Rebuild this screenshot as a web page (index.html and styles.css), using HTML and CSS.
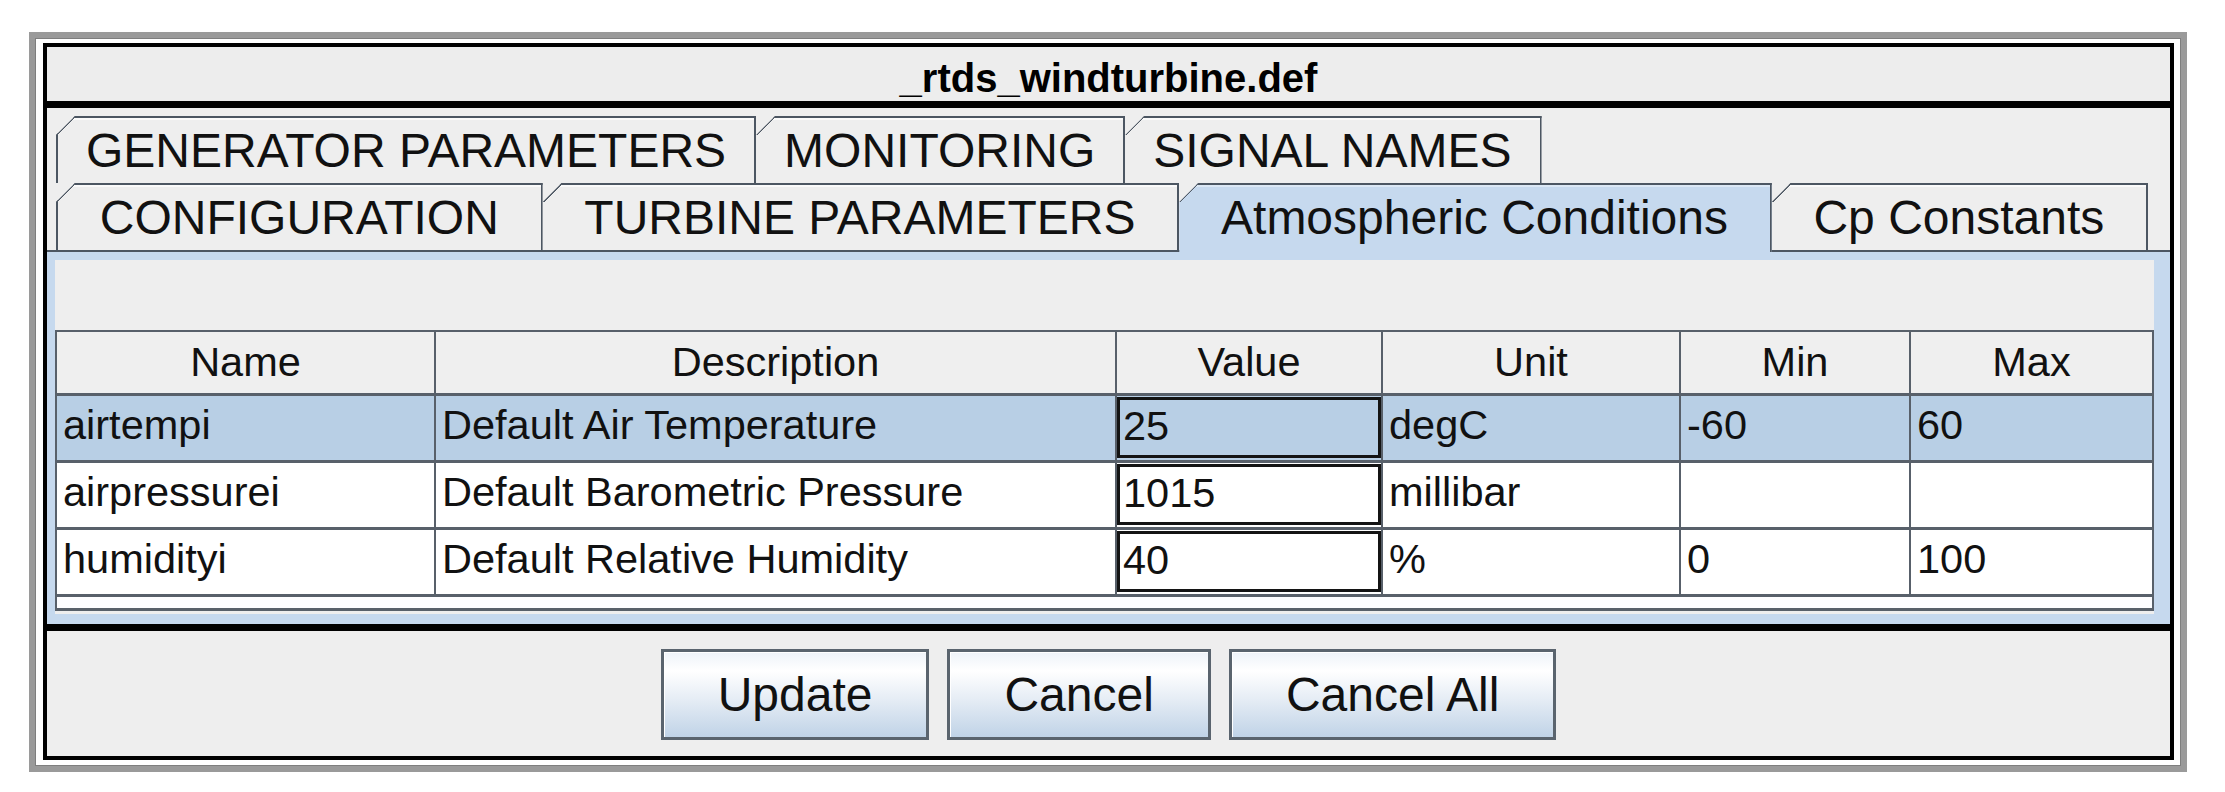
FILE: index.html
```html
<!DOCTYPE html>
<html lang="en">
<head>
<meta charset="utf-8">
<title>_rtds_windturbine.def</title>
<link rel="stylesheet" href="styles.css">
</head>
<body>
<div class="window">
  <div class="frame">
    <div class="title">_rtds_windturbine.def</div>
    <div class="tabpane">
      <div class="tabrow">
        <div class="tab first">GENERATOR PARAMETERS</div>
        <div class="tab">MONITORING</div>
        <div class="tab">SIGNAL NAMES</div>
      </div>
      <div class="tabrow front">
        <div class="tab first">CONFIGURATION</div>
        <div class="tab">TURBINE PARAMETERS</div>
        <div class="tab selected">Atmospheric Conditions</div>
        <div class="tab">Cp Constants</div>
      </div>
      <div class="content">
        <div class="inner">
          <div class="scroll">
            <table class="grid">
              <colgroup>
                <col class="c-name">
                <col class="c-desc">
                <col class="c-val">
                <col class="c-unit">
                <col class="c-min">
                <col class="c-max">
              </colgroup>
              <thead>
                <tr>
                  <th>Name</th>
                  <th>Description</th>
                  <th>Value</th>
                  <th>Unit</th>
                  <th>Min</th>
                  <th>Max</th>
                </tr>
              </thead>
              <tbody>
                <tr class="sel">
                  <td>airtempi</td>
                  <td>Default Air Temperature</td>
                  <td class="val"><div class="edit">25</div></td>
                  <td>degC</td>
                  <td>-60</td>
                  <td>60</td>
                </tr>
                <tr>
                  <td>airpressurei</td>
                  <td>Default Barometric Pressure</td>
                  <td class="val"><div class="edit">1015</div></td>
                  <td>millibar</td>
                  <td></td>
                  <td></td>
                </tr>
                <tr>
                  <td>humidityi</td>
                  <td>Default Relative Humidity</td>
                  <td class="val"><div class="edit">40</div></td>
                  <td>%</td>
                  <td>0</td>
                  <td>100</td>
                </tr>
              </tbody>
            </table>
          </div>
        </div>
      </div>
    </div>
    <div class="buttons">
      <button class="btn">Update</button>
      <button class="btn">Cancel</button>
      <button class="btn">Cancel All</button>
    </div>
  </div>
</div>
</body>
</html>
```

FILE: styles.css
```css
* { box-sizing: border-box; }

html, body {
  margin: 0;
  padding: 0;
  background: #ffffff;
}

body {
  font-family: "Liberation Sans", Arial, sans-serif;
  color: #111111;
}

.window {
  margin: 32px 0 0 29px;
  width: 2158px;
  height: 740px;
  border: 6px solid #9a9a9a;
  box-shadow: inset 0 0 0 1px #7e7e7e;
  padding: 5px 7px 6px 8px;
  background: #ffffff;
}

.frame {
  height: 100%;
  border: 4px solid #000000;
  display: flex;
  flex-direction: column;
  background: #eeeeee;
}

.title {
  height: 54px;
  padding-top: 8px;
  line-height: 46px;
  text-align: center;
  font-weight: bold;
  font-size: 40px;
  color: #000000;
  background: #ededed;
}

.tabpane {
  height: 523px;
  border-top: 7px solid #000000;
  padding-top: 8px;
  display: flex;
  flex-direction: column;
  background: #eeeeee;
}

.tabrow {
  display: flex;
  height: 67px;
  padding: 0 22px 0 9px;
}

.tab {
  position: relative;
  height: 67px;
  padding: 0 28px;
  font-size: 48px;
  line-height: 65px;
  text-align: center;
  white-space: nowrap;
  color: #111111;
  background: #eeeeee;
  border-top: 2px solid #4c5662;
  border-right: 2px solid #4c5662;
  box-shadow: inset 0 2px 0 #fafafa;
  clip-path: polygon(19px 0, 100% 0, 100% 100%, 0 100%, 0 19px);
}

.tab::before {
  content: "";
  position: absolute;
  top: -2px;
  left: 0;
  width: 19px;
  height: 19px;
  background: linear-gradient(to bottom right,
    transparent calc(50% - 1.5px),
    #4c5662 calc(50% - 1.5px),
    #4c5662 calc(50% + 1px),
    transparent calc(50% + 1px));
}

.tab.first {
  border-left: 2px solid #4c5662;
}

.tab.first::before {
  left: -2px;
}

.front .tab {
  flex-grow: 1;
}

.tab.selected {
  z-index: 2;
  height: 69px;
  margin-bottom: -2px;
  background: #c6d9ee;
  box-shadow: inset 0 2px 0 #dbe7f4;
}

.content {
  flex: 1;
  display: flex;
  flex-direction: column;
  border-top: 2px solid #4c5662;
  background: #c6d9ee;
  padding: 8px 16px 10px 8px;
}

.inner {
  flex: 1;
  background: #eeeeee;
  padding-top: 70px;
}

.scroll {
  height: 281px;
  border: 2px solid #58606a;
  border-bottom-width: 3px;
  background: #fdfdff;
}

.grid {
  width: 100%;
  table-layout: fixed;
  border-collapse: separate;
  border-spacing: 0;
  font-size: 41.5px;
}

.c-name { width: 379px; }
.c-desc { width: 681px; }
.c-val  { width: 266px; }
.c-unit { width: 298px; }
.c-min  { width: 230px; }
.c-max  { width: 241px; }

.grid th,
.grid td {
  border-right: 2px solid #58606a;
  border-bottom: 3px solid #58606a;
  white-space: nowrap;
  overflow: hidden;
  color: #111111;
}

.grid th:last-child,
.grid td:last-child {
  border-right: none;
}

.grid thead tr { height: 64px; }
.grid tbody tr { height: 67px; }

.grid th {
  font-weight: normal;
  text-align: center;
  background: #efefef;
  padding: 0 4px 2px;
}

.grid td {
  text-align: left;
  background: #ffffff;
  padding: 0 6px 6px;
}

.grid tr.sel td {
  background: #b8cfe5;
}

.grid td.val {
  padding: 1px 0 2px;
}

.edit {
  height: 61px;
  border: 3px solid #141414;
  padding: 0 0 4px 3px;
  display: flex;
  align-items: center;
}

.buttons {
  flex: 1;
  border-top: 7px solid #000000;
  display: flex;
  justify-content: center;
  align-items: flex-start;
  gap: 18px;
  padding-top: 18px;
  background: #eeeeee;
}

.btn {
  height: 91px;
  padding: 0 54px;
  font-family: "Liberation Sans", Arial, sans-serif;
  font-size: 48px;
  color: #111111;
  border: 3px solid #5a646e;
  background: linear-gradient(to bottom, #eef3f9 0%, #ffffff 22%, #e6edf5 55%, #c0d3e7 100%);
  box-shadow: inset 1px 1px 0 #ffffff;
}
```
